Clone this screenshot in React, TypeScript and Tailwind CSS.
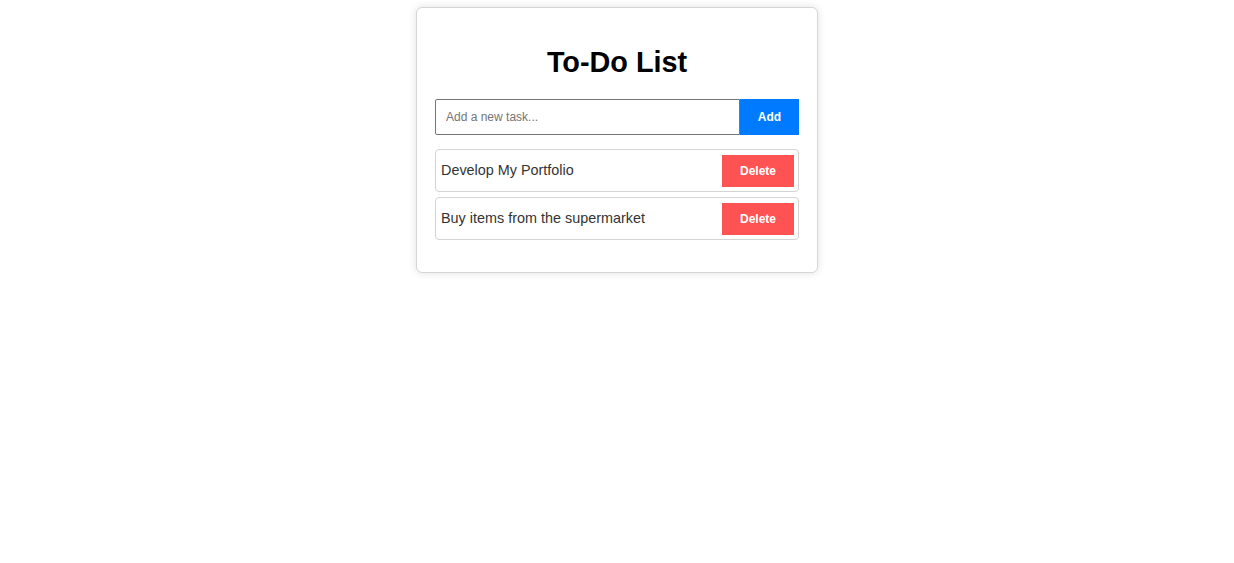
import React from "react";

const tasks = ["Develop My Portfolio", "Buy items from the supermarket"];

export default function App() {
  return (
    <div className="min-h-screen bg-white font-['Liberation_Sans',Arial,sans-serif] pt-[7px]">
      <div className="mx-auto w-[402px] rounded-[6px] border border-[#d6d6d6] bg-white px-[18px] pb-[18px] pt-[19px] shadow-[0_0_8px_rgba(0,0,0,0.12)]">
        <h1 className="mb-[20px] mt-[19px] text-center text-[28.8px] font-bold leading-[33px] text-black">
          To-Do List
        </h1>
        <div className="flex h-[36px]">
          <input
            placeholder="Add a new task..."
            className="h-full min-w-0 flex-1 rounded-l-[2px] border border-[#767676] px-[10px] text-[12px] text-[#333] outline-none placeholder:text-[#757575]"
          />
          <button className="h-full w-[59px] bg-[#007bff] text-[12px] font-bold text-white">
            Add
          </button>
        </div>
        <ul className="mb-[14px] mt-[14px] flex flex-col gap-[5px]">
          {tasks.map((t) => (
            <li
              key={t}
              className="flex h-[43px] items-center justify-between rounded-[4px] border border-[#d4d4d4] pl-[5px] pr-[4px] text-[14.4px] text-[#333]"
            >
              <span>{t}</span>
              <button className="h-[32px] w-[72px] bg-[#ff5252] text-[12px] font-bold text-white">
                Delete
              </button>
            </li>
          ))}
        </ul>
      </div>
    </div>
  );
}
